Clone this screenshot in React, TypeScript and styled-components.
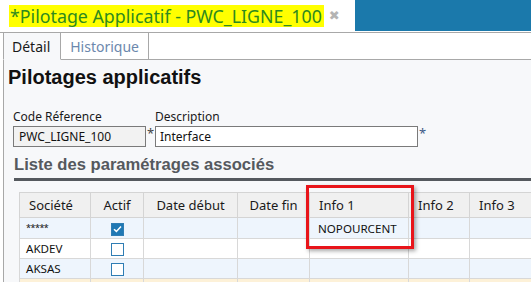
import React from 'react';
import styled, { createGlobalStyle } from 'styled-components';

const GlobalStyle = createGlobalStyle`
  html, body {
    margin: 0;
    padding: 0;
    background: #ffffff;
  }
  body {
    width: 531px;
    height: 282px;
    overflow: hidden;
    font-family: "Noto Sans", "Liberation Sans", sans-serif;
  }
`;

const Page = styled.div`
  display: flex;
  flex-direction: column;
  width: 531px;
  height: 282px;
  overflow: hidden;
`;

const TitleBar = styled.div`
  display: flex;
  align-items: flex-start;
  height: 33px;
  border-bottom: 1px solid #a8a8a8;
  box-sizing: border-box;
  flex-shrink: 0;
`;

const Title = styled.span`
  margin: 5px 0 0 9px;
  height: 22px;
  line-height: 22px;
  padding: 0 2px 0 1px;
  background: #ffff00;
  color: #2e8a1f;
  font-size: 17.8px;
  white-space: nowrap;
`;

const Close = styled.span`
  margin: 7px 0 0 5px;
  color: #b4b4b4;
  font-family: "DejaVu Sans", sans-serif;
  font-weight: bold;
  font-size: 13px;
  line-height: 18px;
`;

const BlueBlock = styled.div`
  margin-left: auto;
  width: 176px;
  height: 31px;
  background: #1b79ab;
`;

const TabRow = styled.div`
  display: flex;
  height: 27px;
  padding-left: 3px;
  flex-shrink: 0;
`;

const Tab = styled.div<{ $active?: boolean }>`
  display: flex;
  align-items: center;
  padding: 0 ${p => (p.$active ? '10px' : '9px')} 0 ${p => (p.$active ? '8px' : '9px')};
  border-left: ${p => (p.$active ? '1px solid #a8a8a8' : 'none')};
  border-right: 1px solid #a8a8a8;
  border-bottom: ${p => (p.$active ? '1px solid transparent' : '1px solid #a8a8a8')};
  background: ${p => (p.$active ? '#f7f8fa' : '#ffffff')};
  color: ${p => (p.$active ? '#1a1a1a' : '#6c88ad')};
  font-size: 14px;
`;

const TabFiller = styled.div`
  flex: 1;
  border-bottom: 1px solid #a8a8a8;
`;

const Panel = styled.div`
  flex: 1;
  margin-left: 3px;
  border-left: 1px solid #a8a8a8;
  background: #f7f8fa;
  padding: 6px 0 0 4px;
  display: flex;
  flex-direction: column;
`;

const Heading = styled.h1`
  margin: 0;
  font-family: "Liberation Sans", Arial, sans-serif;
  font-weight: bold;
  font-size: 20px;
  line-height: 23px;
  color: #111111;
`;

const FieldRow = styled.div`
  display: flex;
  margin: 19px 0 0 5px;
`;

const Field = styled.div`
  display: flex;
  flex-direction: column;
`;

const Label = styled.label`
  font-size: 12px;
  line-height: 17px;
  height: 17px;
  color: #1a1a1a;
  margin-bottom: 1px;
`;

const InputLine = styled.div`
  display: flex;
  align-items: flex-start;
`;

const Input = styled.div<{ $width: number; $readOnly?: boolean }>`
  width: ${p => p.$width}px;
  height: 21px;
  box-sizing: border-box;
  border: 1px solid #7a7a7a;
  background: ${p => (p.$readOnly ? '#f2f2f2' : '#ffffff')};
  padding-left: ${p => (p.$readOnly ? '5px' : '4px')};
  font-size: 12px;
  line-height: 19px;
  color: #111111;
`;

const Required = styled.span<{ $blue?: boolean }>`
  width: 9px;
  padding-left: 1px;
  box-sizing: border-box;
  font-size: 13px;
  line-height: 14px;
  color: ${p => (p.$blue ? '#3d5a86' : '#444444')};
`;

const SectionTitle = styled.h2`
  margin: 8px 0 0 6px;
  padding-bottom: 4px;
  border-bottom: 3px solid #55595e;
  font-family: "Liberation Sans", Arial, sans-serif;
  font-weight: bold;
  font-size: 16.6px;
  line-height: 19px;
  color: #55595e;
`;

const TableWrap = styled.div`
  position: relative;
  margin: 11px 0 0 11px;
`;

const Grid = styled.table`
  border-collapse: collapse;
  table-layout: fixed;
  width: 512px;
  font-size: 11.6px;
  color: #111111;
`;

const Th = styled.th<{ $align?: 'left' | 'center' }>`
  height: 24px;
  padding: 0 0 0 ${p => (p.$align === 'center' ? '0' : '9px')};
  text-align: ${p => p.$align || 'left'};
  background: #f0f0f0;
  border: 1px solid #d4d4d4;
  font-weight: normal;
  font-size: 13px;
  color: #1a1a1a;
  white-space: nowrap;
`;

const Tr = styled.tr<{ $tone: 'blue' | 'white' | 'yellow' }>`
  background: ${p => (p.$tone === 'blue' ? '#eef5fd' : p.$tone === 'yellow' ? '#fdf1d8' : '#ffffff')};
`;

const Td = styled.td<{ $center?: boolean }>`
  height: 19px;
  padding: 0 0 0 ${p => (p.$center ? '0' : '6px')};
  text-align: ${p => (p.$center ? 'center' : 'left')};
  border: 1px solid #d8d8d8;
  white-space: nowrap;
  line-height: 19px;
`;

const InfoTd = styled(Td)`
  padding-left: 8px;
`;

const Stars = styled.span`
  font-size: 9px;
  letter-spacing: -0.5px;
  vertical-align: 2px;
`;

const Box = styled.span<{ $checked?: boolean }>`
  display: inline-flex;
  align-items: center;
  justify-content: center;
  width: 13px;
  height: 13px;
  box-sizing: border-box;
  vertical-align: middle;
  border: 1.5px solid #2f7db4;
  background: ${p => (p.$checked ? '#1f78b4' : '#ffffff')};
  margin-left: 1px;
`;

const Highlight = styled.div`
  position: absolute;
  left: 287px;
  top: -7px;
  width: 108px;
  height: 64px;
  box-sizing: border-box;
  border: 3px solid #e8141a;
  box-shadow: 2px 2px 4px rgba(0, 0, 0, 0.35);
  pointer-events: none;
`;

const Check = () => (
  <svg width="9" height="8" viewBox="0 0 9 8">
    <path d="M1 4.2 L3.4 6.4 L8 1.4" fill="none" stroke="#ffffff" strokeWidth="1.5" />
  </svg>
);

const rows = [
  { code: '*****', active: true, info1: 'NOPOURCENT', tone: 'blue' as const },
  { code: 'AKDEV', active: false, info1: '', tone: 'white' as const },
  { code: 'AKSAS', active: false, info1: '', tone: 'blue' as const },
  { code: '', active: false, info1: '', tone: 'yellow' as const, empty: true },
];

export default function App() {
  return (
    <Page>
      <GlobalStyle />
      <TitleBar>
        <Title>*Pilotage Applicatif - PWC_LIGNE_100</Title>
        <Close>✖</Close>
        <BlueBlock />
      </TitleBar>
      <TabRow>
        <Tab $active>Détail</Tab>
        <Tab>Historique</Tab>
        <TabFiller />
      </TabRow>
      <Panel>
        <Heading>Pilotages applicatifs</Heading>
        <FieldRow>
          <Field>
            <Label>Code Réference</Label>
            <InputLine>
              <Input $width={133} $readOnly>PWC_LIGNE_100</Input>
              <Required>*</Required>
            </InputLine>
          </Field>
          <Field>
            <Label>Description</Label>
            <InputLine>
              <Input $width={263}>Interface</Input>
              <Required $blue>*</Required>
            </InputLine>
          </Field>
        </FieldRow>
        <SectionTitle>Liste des paramétrages associés</SectionTitle>
        <TableWrap>
          <Grid>
            <colgroup>
              <col style={{ width: 71 }} />
              <col style={{ width: 53 }} />
              <col style={{ width: 94 }} />
              <col style={{ width: 72 }} />
              <col style={{ width: 99 }} />
              <col style={{ width: 61 }} />
              <col style={{ width: 62 }} />
            </colgroup>
            <thead>
              <tr>
                <Th>Société</Th>
                <Th $align="center">Actif</Th>
                <Th $align="center">Date début</Th>
                <Th $align="center">Date fin</Th>
                <Th>Info 1</Th>
                <Th>Info 2</Th>
                <Th>Info 3</Th>
              </tr>
            </thead>
            <tbody>
              {rows.map((r, i) => (
                <Tr key={i} $tone={r.tone}>
                  <Td>{r.code === '*****' ? <Stars>*****</Stars> : r.code}</Td>
                  <Td $center>
                    {!r.empty && <Box $checked={r.active}>{r.active && <Check />}</Box>}
                  </Td>
                  <Td />
                  <Td />
                  <InfoTd>{r.info1}</InfoTd>
                  <Td />
                  <Td />
                </Tr>
              ))}
            </tbody>
          </Grid>
          <Highlight />
        </TableWrap>
      </Panel>
    </Page>
  );
}
